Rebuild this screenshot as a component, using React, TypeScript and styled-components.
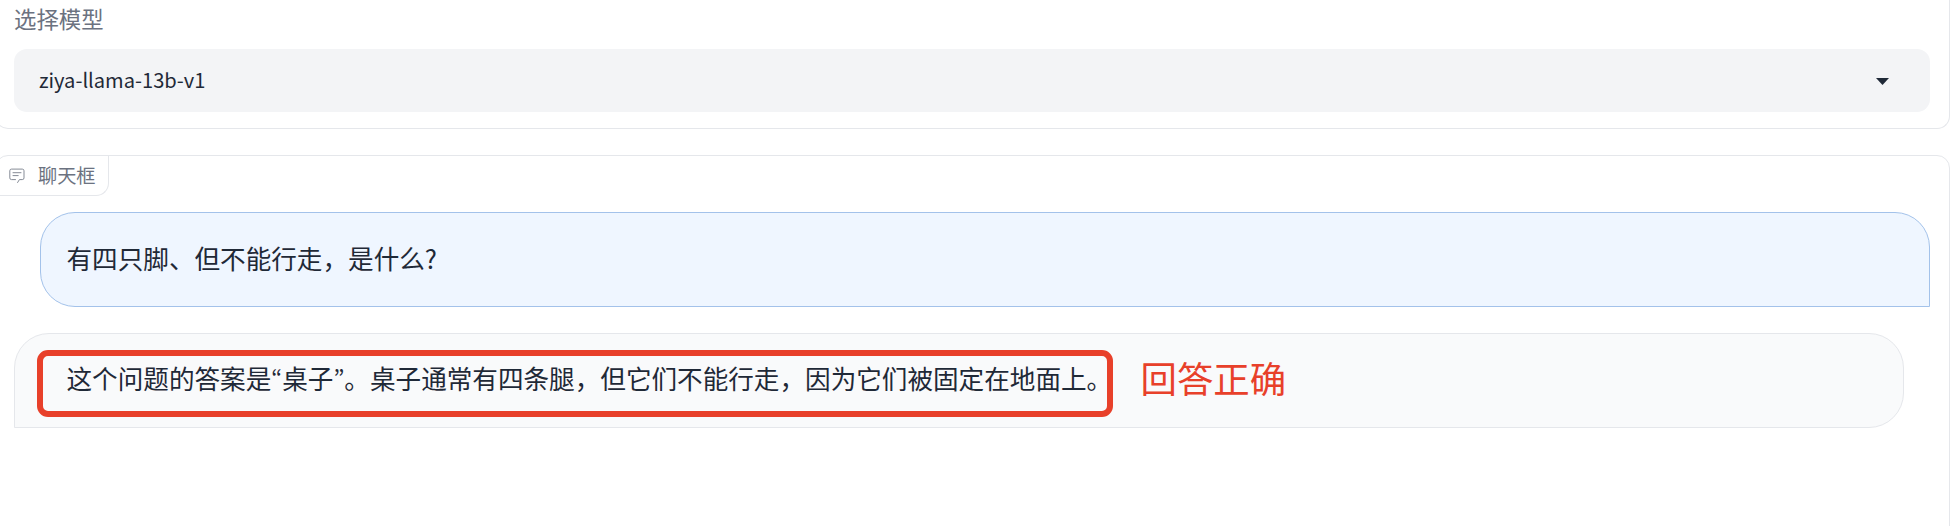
import React from "react";
import styled, { createGlobalStyle, css } from "styled-components";

const GlobalStyle = createGlobalStyle`
  *, *::before, *::after { box-sizing: border-box; }
  body {
    margin: 0;
    background: #fff;
    color: #1f2937;
    font-family: "Noto Sans CJK SC", sans-serif;
  }
`;

const Page = styled.main`
  display: flex;
  flex-direction: column;
  gap: 26px;
  height: 526px;
  margin-left: -5px;
  padding-right: 4px;
  overflow: hidden;
`;

const Panel = styled.section`
  border: 1px solid #e5e7eb;
  border-radius: 13px;
  background: #fff;
`;

const ModelPanel = styled(Panel)`
  flex: none;
  height: 129px;
  padding: 0 19px 0 18px;
  border-top: 0;
  border-top-left-radius: 0;
  border-top-right-radius: 0;
`;

const FieldLabel = styled.div`
  height: 49px;
  padding-top: 2px;
  color: #6b7280;
  font-size: 22.4px;
  line-height: 32px;
`;

const Select = styled.button`
  display: flex;
  align-items: center;
  justify-content: space-between;
  width: 100%;
  height: 63px;
  padding: 0 41px 0 25px;
  border: 0;
  border-radius: 13px;
  background: #f3f4f6;
  color: #1f2937;
  font: 400 20.1px/34px "Noto Sans CJK SC", sans-serif;
`;

const SelectValue = styled.span`
  padding-bottom: 2px;
`;

const Caret = styled.svg`
  width: 13px;
  height: 7px;
  margin-top: 2px;
`;

const ChatPanel = styled(Panel)`
  flex: none;
  height: 420px;
`;

const PanelTag = styled.div`
  display: flex;
  align-items: center;
  gap: 13px;
  width: 113px;
  height: 40px;
  padding: 0 0 1px 13px;
  border: solid #e5e7eb;
  border-width: 0 1px 1px 0;
  border-radius: 13px 0 13px 0;
  color: #6b7280;
  font-size: 19.2px;
  line-height: 28px;
`;

const TagText = styled.span`
  padding-bottom: 1px;
`;

const TagIcon = styled.svg`
  flex: none;
  width: 16px;
  height: 16px;
  margin-top: 1px;
  color: #858b96;
`;

const Messages = styled.div`
  display: flex;
  flex-direction: column;
  gap: 26px;
  padding: 16px 19px 0 18px;
`;

const Bubble = styled.div<{ $from: "user" | "bot" }>`
  position: relative;
  height: 95px;
  border: 1px solid;
  font-size: 25.6px;
  line-height: 41px;
  white-space: nowrap;
  ${({ $from }) =>
    $from === "user"
      ? css`
          margin-left: 26px;
          padding: 24px 25.5px;
          border-color: #a3c2ea;
          border-radius: 35px 35px 0 35px;
          background: #eff6ff;
        `
      : css`
          margin-right: 26px;
          padding: 23px 51.5px;
          border-color: #e5e7eb;
          border-radius: 35px 35px 35px 0;
          background: #f9fafb;
        `}
`;

const Quote = styled.span`
  font-size: 23px;
  line-height: 1;
  font-feature-settings: "pwid";
`;

const Highlight = styled.div`
  position: absolute;
  left: 22px;
  top: 16px;
  width: 1076px;
  height: 67px;
  border: 6px solid #e8402a;
  border-radius: 11px;
`;

const Note = styled.span`
  position: absolute;
  left: 1125.5px;
  top: 17px;
  color: #e8402a;
  font-size: 36.4px;
  line-height: 52px;
`;

export default function App() {
  return (
    <>
      <GlobalStyle />
      <Page>
        <ModelPanel>
          <FieldLabel>选择模型</FieldLabel>
          <Select>
            <SelectValue>ziya-llama-13b-v1</SelectValue>
            <Caret viewBox="0 0 13 7" fill="currentColor">
              <path d="M0 0h13L6.5 7z" />
            </Caret>
          </Select>
        </ModelPanel>
        <ChatPanel>
          <PanelTag>
            <TagIcon viewBox="0 0 16 16" fill="none" stroke="currentColor" strokeLinecap="round" strokeLinejoin="round">
              <path d="M6.5 11.6H2.5a1.7 1.7 0 0 1-1.7-1.7V2.8a1.7 1.7 0 0 1 1.7-1.7h10.8a1.7 1.7 0 0 1 1.7 1.7v7.1a1.7 1.7 0 0 1-1.7 1.7h-2.9L8.6 14.5" />
              <path d="M4 4.7h8M4 7.6h5.2" />
            </TagIcon>
            <TagText>聊天框</TagText>
          </PanelTag>
          <Messages>
            <Bubble $from="user">有四只脚、但不能行走，是什么?</Bubble>
            <Bubble $from="bot">
              这个问题的答案是<Quote>“</Quote>桌子<Quote>”</Quote>。桌子通常有四条腿，但它们不能行走，因为它们被固定在地面上。
              <Highlight />
              <Note>回答正确</Note>
            </Bubble>
          </Messages>
        </ChatPanel>
      </Page>
    </>
  );
}
